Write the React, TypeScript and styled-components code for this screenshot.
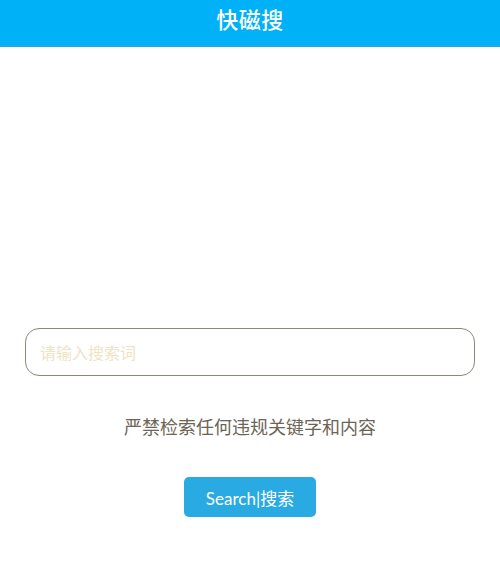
import React, { useState } from "react";
import styled, { createGlobalStyle } from "styled-components";

const GlobalStyle = createGlobalStyle`
    html, body {
        margin: 0;
        padding: 0;
        background: #ffffff;
        font-family: "Noto Sans", "Noto Sans CJK SC", sans-serif;
    }
`;

const Page = styled.div`
    display: flex;
    flex-direction: column;
    min-height: 574px;
`;

const Header = styled.header`
    height: 45px;
    background: #00b1f7;
    border-bottom: 2px solid #22a8e6;
    display: flex;
    align-items: center;
    justify-content: center;
`;

const Title = styled.h1`
    margin: 0;
    margin-top: -10px;
    font-size: 22px;
    font-weight: 500;
    color: #ffffff;
    letter-spacing: 0.5px;
    font-family: "Noto Sans CJK SC", sans-serif;
`;

const Main = styled.main`
    display: flex;
    flex-direction: column;
    align-items: center;
    padding: 281px 25px 0;
`;

const SearchInput = styled.input`
    box-sizing: border-box;
    width: 100%;
    height: 48px;
    border: 1px solid #8f8677;
    border-radius: 14px;
    padding: 0 14px;
    font-size: 16px;
    font-family: "Noto Sans CJK SC", sans-serif;
    color: #333;
    outline: none;
    &::placeholder {
        color: #efe3c4;
    }
`;

const Notice = styled.p`
    margin: 37px 0 0;
    font-size: 18px;
    color: #6c6556;
    font-family: "Noto Sans CJK SC", sans-serif;
`;

const SearchButton = styled.button`
    margin-top: 38px;
    width: 132px;
    height: 40px;
    border: none;
    border-radius: 5px;
    background: #29aae2;
    color: #ffffff;
    font-size: 17px;
    font-family: Lato, "Noto Sans CJK SC", sans-serif;
    cursor: pointer;
`;

const App = () => {
    const [keyword, setKeyword] = useState("");

    return (
        <Page>
            <GlobalStyle />
            <Header>
                <Title>快磁搜</Title>
            </Header>
            <Main>
                <SearchInput
                    value={keyword}
                    placeholder="请输入搜索词"
                    onChange={(e) => setKeyword(e.target.value)}
                />
                <Notice>严禁检索任何违规关键字和内容</Notice>
                <SearchButton>Search|搜索</SearchButton>
            </Main>
        </Page>
    );
};

export default App;
